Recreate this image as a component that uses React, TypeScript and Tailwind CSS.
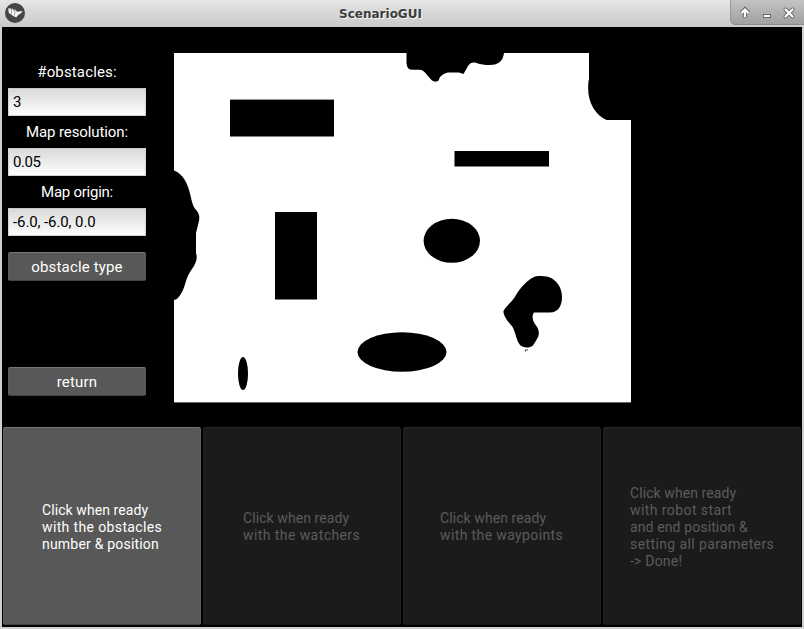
import React from "react";

const fieldLabel =
  "flex h-8 items-center justify-center whitespace-pre text-[15px] leading-none text-white";
const sideButton =
  "flex h-[29px] w-full items-center justify-center rounded-[2px] border border-t-[#757575] border-x-[#5e5e5e] border-b-[#434343] bg-[#585858] pt-0.5 text-[15px] leading-none text-white";

type FieldProps = { label: string; value: string; tracking: string; valueTracking: string };

function Field({ label, value, tracking, valueTracking }: FieldProps) {
  return (
    <div className="h-[60px]">
      <div className={`${fieldLabel} ${tracking}`}>{label}</div>
      <div
        className={`flex h-7 items-center border border-t-[#c8c8c8] border-x-[#d4d4d4] border-b-[#d0d0d0] bg-linear-to-b from-[#dadada] to-[#fdfdfd] pl-1 text-[15px] leading-none text-black ${valueTracking}`}
      >
        {value}
      </div>
    </div>
  );
}

function TitleBar() {
  return (
    <header className="flex h-[27px] shrink-0 items-start bg-linear-to-b from-[#e6e6e6] to-[#c9c9c9]">
      <svg className="ml-[5px] mt-[3px] h-5 w-5 shrink-0" viewBox="0 0 20 20">
        <circle cx="10" cy="10" r="10" fill="#434648" />
        <g fill="#f4f4f4">
          <path d="M3.2 5.3L6.2 5.8L6.8 12L3.8 10Z" />
          <path d="M6.6 5L10 8.6L8.8 13.4L7 12.2Z" />
          <path d="M9 5.4L12.2 8.8L17.6 8L15.8 10.4L13.4 11.8L11.2 14.6L9 13.2L10.4 9Z" />
        </g>
      </svg>
      <h1 className="flex h-[27px] flex-1 items-center justify-center font-['DejaVu_Sans'] text-[12px] font-bold leading-none text-[#3c3c3c] [text-shadow:1px_1px_0_#f5f5f5]">
        <span className="pl-[6px]">ScenarioGUI</span>
      </h1>
      <div className="h-[25px] w-[74px] shrink-0 rounded-bl-[5px] border-b border-l border-b-[#8c8c8c] border-l-[#999] bg-linear-to-b from-[#c4c4c4] to-[#a0a0a0]">
        <svg className="h-6 w-[73px]" viewBox="0 0 73 24" fill="none">
          <g stroke="#686868" strokeWidth="4">
            <path d="M14 17.5V11M10.5 13L14 9.5L17.5 13" strokeWidth="4.5" />
            <path d="M32 16h8" strokeWidth="4" />
            <path d="M54.5 9.5l7 7M61.5 9.5l-7 7" strokeLinecap="round" />
          </g>
          <g stroke="#fff" strokeWidth="2.2">
            <path d="M14 17V10M10.5 13L14 9.5L17.5 13" />
            <path d="M33 16h6" strokeWidth="2" />
            <path d="M54.5 9.5l7 7M61.5 9.5l-7 7" strokeLinecap="round" />
          </g>
        </svg>
      </div>
    </header>
  );
}

/* Occupancy map: white is free space, black is occupied. */
function ObstacleMap() {
  return (
    <svg className="mt-[26px] ml-7 block h-[350px] w-[458px]" viewBox="174 53 458 350" fill="#000">
      <rect x="174" y="53" width="457" height="349.4" fill="#fff" />
      <path d="M406.5 53V63C407 67 408 69.7 412 69.7H420C423 70 425 72 427 75L432 80.5C434 82 437 82 438.5 80.5L440 77C443 74 446 73 448 72.5H459L463.5 74L468 66C470 63 472 62 475 62.5C480 64.5 485 65 490 65C497 65 503 62 504 53Z" />
      <path d="M589 53V79C588 82 588 87 588.5 94C590 105 596 115 606.5 120H632V53Z" />
      <path d="M174 170.5C180 173 185 178 188 187C191 195 191.5 203 194.5 208C199 213 200.5 216 198.5 223L196 233V253C198 259 195.5 264 192 269C186 277 186 283 183 290C180 296 177 300 174 300Z" />
      <rect x="230" y="99.6" width="104" height="36.9" />
      <rect x="454.5" y="151" width="94.5" height="15.5" />
      <rect x="275" y="212" width="42" height="87.5" />
      <ellipse cx="451.8" cy="240.8" rx="28.2" ry="22" />
      <ellipse cx="402" cy="352" rx="44.5" ry="19.8" />
      <ellipse cx="243" cy="373.5" rx="5" ry="16.5" />
      <path d="M533 277.5C537 275.5 546 275.5 552 278.5C559 283 562 290 562 297C562 306 558 312.5 550 312.5H534C532 315 532 320 535 324C540 330 539.5 335 537 339L533 345.5C529 348.5 523 348 520 345C516 340 516 333 512 326C509 323 503 316 503.5 311C506 306 513 301 516 295C521 287 527 280.5 533 277.5Z" />
      <path d="M525 349.5h3v1h-2v1h-1z" opacity=".7" />
    </svg>
  );
}

const ready = { text: "Click when ready", tracking: "tracking-[0.08px]" };

const steps = [
  {
    lines: [
      ready,
      { text: "with the obstacles", tracking: "tracking-[0.37px]" },
      { text: "number & position", tracking: "tracking-[0.2px]" },
    ],
    inset: "pl-[38px]",
    active: true,
  },
  { lines: [ready, { text: "with the watchers", tracking: "tracking-[0.42px]" }], inset: "pl-[39px]", active: false },
  { lines: [ready, { text: "with the waypoints", tracking: "tracking-[0.38px]" }], inset: "pl-9", active: false },
  {
    lines: [
      ready,
      { text: "with robot start", tracking: "tracking-[0.42px]" },
      { text: "and end position &", tracking: "tracking-[0.12px]" },
      { text: "setting all parameters", tracking: "tracking-[0.4px]" },
      { text: "-> Done!", tracking: "tracking-[0.2px]" },
    ],
    inset: "pl-[26px]",
    active: false,
  },
];

export default function App() {
  return (
    <div className="flex h-[629px] w-[804px] flex-col overflow-hidden bg-[#d2d0ce] font-[Roboto,sans-serif]">
      <TitleBar />
      <main className="mx-[2px] flex h-[600px] flex-col bg-black">
        <div className="flex h-[399px] items-start">
          <aside className="ml-1.5 flex h-[399px] w-[138px] shrink-0 flex-col pt-[29px]">
            <Field label="#obstacles:" value="3" tracking="tracking-[0.15px]" valueTracking="tracking-normal" />
            <Field label="Map resolution:" value="0.05" tracking="tracking-[-0.1px]" valueTracking="tracking-[-0.4px]" />
            <Field label="Map origin:" value="-6.0, -6.0, 0.0" tracking="tracking-[-0.25px]" valueTracking="tracking-[-0.1px]" />
            <button className={`${sideButton} mt-4 tracking-[0.15px]`}>obstacle type</button>
            <button className={`${sideButton} mt-[86px] tracking-[0.2px]`}>return</button>
          </aside>
          <ObstacleMap />
        </div>
        <div className="grid h-[201px] grid-cols-4 gap-[2px] px-px pt-px pb-[2px]">
          {steps.map((step) => (
            <button
              key={step.lines[1].text}
              className={`flex items-center rounded-[2px] border pt-0.5 text-left text-[14px] leading-[17px] ${step.inset} ${
                step.active
                  ? "border-t-[#757575] border-x-[#606060] border-b-[#454545] bg-[#585858] text-white"
                  : "border-t-[#272727] border-x-[#202020] border-b-[#151515] bg-[#1b1b1b] text-[#5b5b5b]"
              }`}
            >
              <span className="block">
                {step.lines.map((line) => (
                  <span key={line.text} className={`block whitespace-nowrap ${line.tracking}`}>
                    {line.text}
                  </span>
                ))}
              </span>
            </button>
          ))}
        </div>
      </main>
    </div>
  );
}
